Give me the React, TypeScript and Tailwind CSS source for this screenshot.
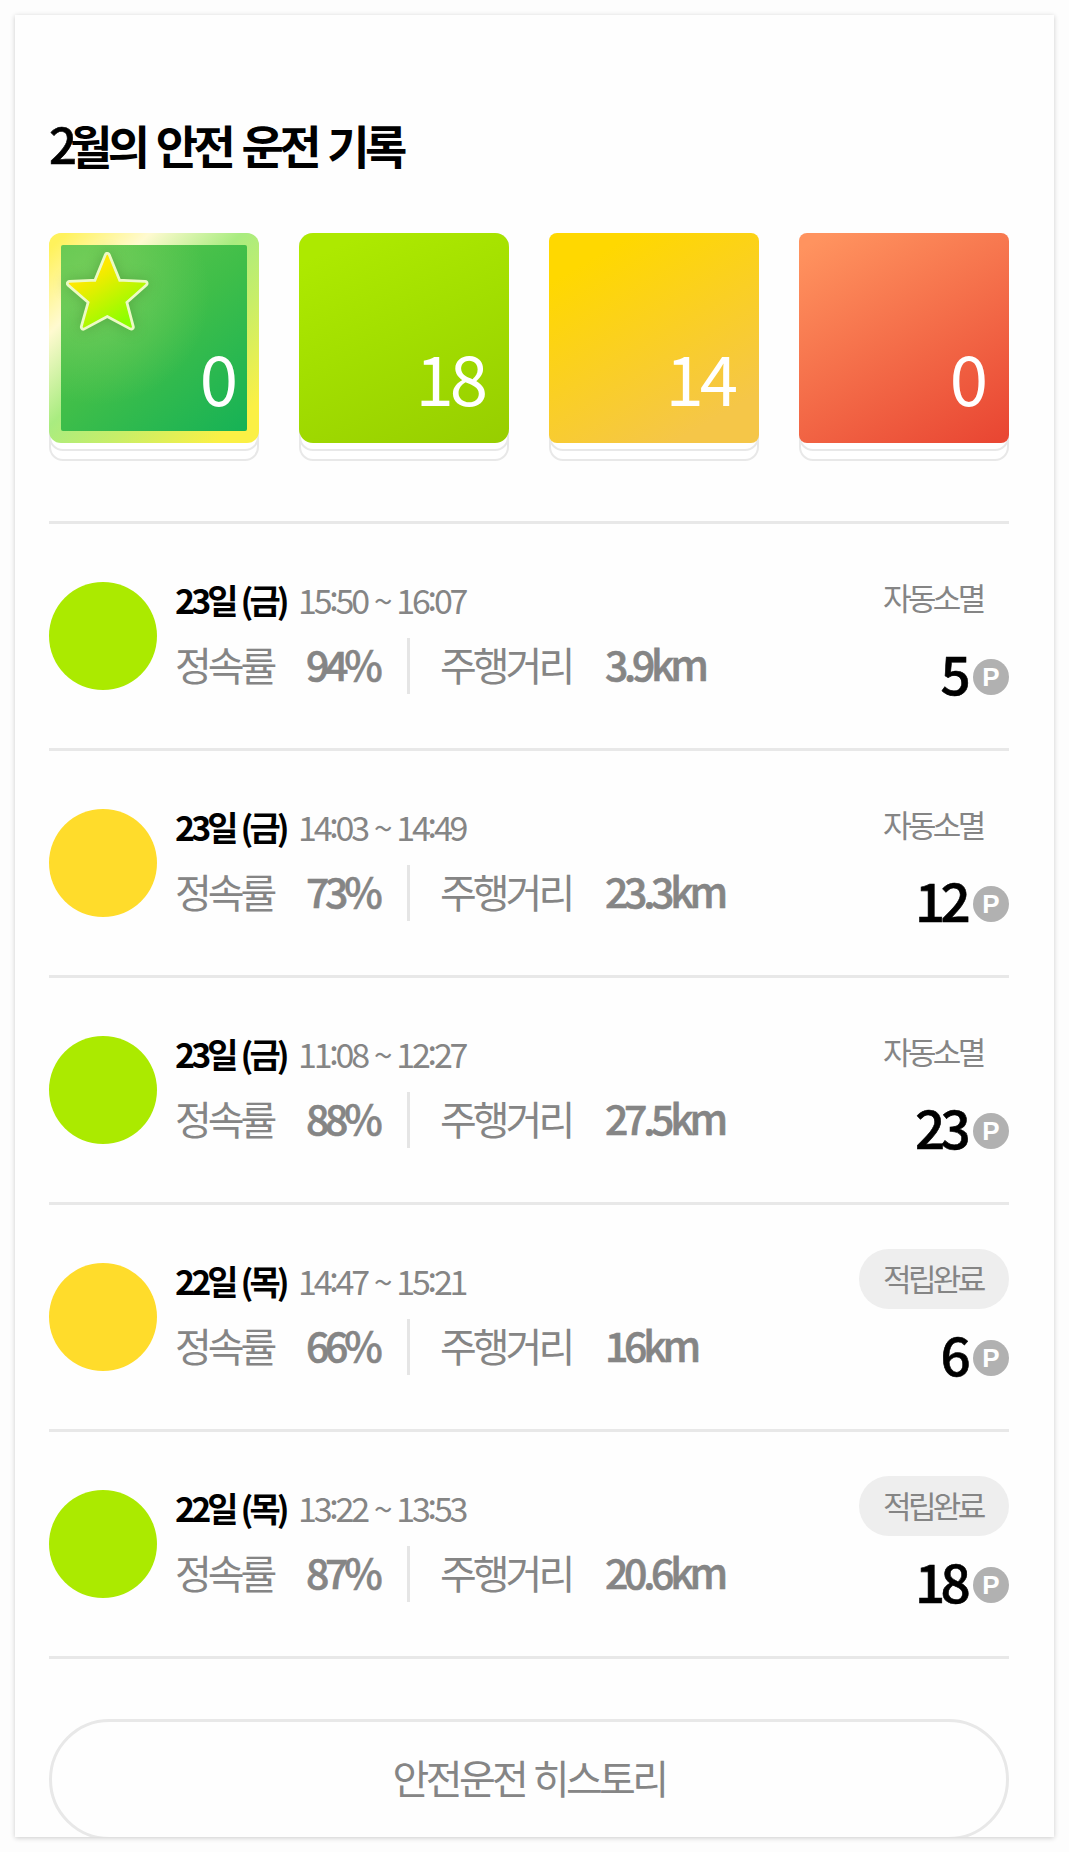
interface Trip {
  id: number;
  date: string;
  start: string;
  end: string;
  rate: number;
  distance: string;
  points: number;
  status: 'expired' | 'saved';
  grade: 'good' | 'normal';
}

const trips: Trip[] = [
  { id: 1, date: '23일 (금)', start: '15:50', end: '16:07', rate: 94, distance: '3.9km', points: 5, status: 'expired', grade: 'good' },
  { id: 2, date: '23일 (금)', start: '14:03', end: '14:49', rate: 73, distance: '23.3km', points: 12, status: 'expired', grade: 'normal' },
  { id: 3, date: '23일 (금)', start: '11:08', end: '12:27', rate: 88, distance: '27.5km', points: 23, status: 'expired', grade: 'good' },
  { id: 4, date: '22일 (목)', start: '14:47', end: '15:21', rate: 66, distance: '16km', points: 6, status: 'saved', grade: 'normal' },
  { id: 5, date: '22일 (목)', start: '13:22', end: '13:53', rate: 87, distance: '20.6km', points: 18, status: 'saved', grade: 'good' },
];

const summary = [
  { id: 'best', count: 0, className: 'rounded-[12px] bg-[linear-gradient(135deg,#fff25c_4%,#fffad0_24%,#a9ec80_46%,#c8ee68_65%,#fbf045_90%)]' },
  { id: 'good', count: 18, className: 'rounded-[14px] bg-[linear-gradient(155deg,#ade900_10%,#a2de00_50%,#97ce00_100%)]' },
  { id: 'normal', count: 14, className: 'rounded-[8px] bg-[linear-gradient(150deg,#ffd800_15%,#f5c648_85%)]' },
  { id: 'bad', count: 0, className: 'rounded-[8px] bg-[linear-gradient(150deg,#ff935f_5%,#e94733_97%)]' },
];

const starPath =
  'M50.3 14.5 L61.2 41.3 L88 42.5 L67.5 60.7 L74.2 86 L50.3 73.2 L26.4 86 L33.5 60.7 L12.5 42.5 L39.4 41.3 Z';

function Star() {
  return (
    <svg
      viewBox="0 0 100 100"
      className="absolute left-2 top-2 h-[100px] w-[100px] drop-shadow-[0_0_7px_rgba(60,130,40,0.45)]"
    >
      <defs>
        <linearGradient id="star-fill" x1="0.2" y1="0.1" x2="0.8" y2="1">
          <stop offset="0.15" stopColor="#ffe900" />
          <stop offset="0.9" stopColor="#8dff00" />
        </linearGradient>
      </defs>
      <path d={starPath} fill="#ecfac4" stroke="#ecfac4" strokeWidth="7" strokeLinejoin="round" />
      <path d={starPath} fill="url(#star-fill)" stroke="url(#star-fill)" strokeWidth="1.5" strokeLinejoin="round" />
    </svg>
  );
}

// Hours and minutes with the colon lifted to the middle of the digits
function Clock({ value }: { value: string }) {
  const [hour, minute] = value.split(':');
  return (
    <>
      {hour}
      <span className="align-[3px] leading-none">:</span>
      {minute}
    </>
  );
}

function PointIcon() {
  return (
    <span className="ml-[7px] mt-[18px] flex h-9 w-9 items-center justify-center rounded-full bg-[#b1b1b1] font-['Liberation_Sans',sans-serif] text-[26px] font-bold leading-9 tracking-normal text-white">
      P
    </span>
  );
}

function TripRow({ trip }: { trip: Trip }) {
  return (
    <li className="flex h-[227px] border-b-[3px] border-[#e8e8e8]">
      <div
        className={`mt-[58px] h-[108px] w-[108px] shrink-0 rounded-full ${
          trip.grade === 'good' ? 'bg-[#abea00]' : 'bg-[#ffdc2b]'
        }`}
      />

      <div className="ml-[18px] flex-1 pt-[53px]">
        <div className="flex h-11 items-start whitespace-pre text-[34px] leading-[46px]">
          <strong className="w-[123px] font-bold tracking-[-3.9px] text-black [word-spacing:2px]">{trip.date}</strong>
          <span className="tracking-[-3.2px] text-[#858585] [word-spacing:2.4px]">
            <Clock value={trip.start} /> ~ <Clock value={trip.end} />
          </span>
        </div>
        <div className="mt-[17px] flex h-14 items-start whitespace-nowrap text-[40px] leading-[52px] tracking-[-4px] text-[#858585]">
          <span className="w-[131px]">정속률</span>
          <span className="w-[101px] text-[41px] font-medium leading-[50px] tracking-[-4.3px] [-webkit-text-stroke:0.6px]">
            {trip.rate}%
          </span>
          <span className="h-14 w-[3px] bg-[#e5e5e5]" />
          <span className="ml-[30px] w-[165px]">주행거리</span>
          <span className="text-[41px] font-medium leading-[50px] tracking-[-4.3px] [-webkit-text-stroke:0.6px]">
            {trip.distance}
          </span>
        </div>
      </div>

      {/* Points */}
      <div className="flex flex-col items-end pt-11">
        <span
          className={`h-[60px] w-[150px] whitespace-nowrap rounded-full pl-6 text-[31px] leading-[58px] tracking-[-3.6px] text-[#858585] ${
            trip.status === 'saved' ? 'bg-[#eeeeee]' : ''
          }`}
        >
          {trip.status === 'saved' ? '적립완료' : '자동소멸'}
        </span>
        <div className="mt-[13px] flex h-[60px] items-start">
          <span className="text-[53px] font-medium leading-[63px] tracking-[-4.7px] text-black [-webkit-text-stroke:0.6px]">
            {trip.points}
          </span>
          <PointIcon />
        </div>
      </div>
    </li>
  );
}

export default function App() {
  return (
    <div className="h-[1852px] w-[1069px] bg-[#fdfdfd] p-[15px] font-['Noto_Sans_CJK_KR',sans-serif]">
      <main className="h-[1822px] w-[1039px] overflow-hidden bg-[#fefefe] pl-[34px] pr-[45px] pt-[97px] shadow-[0_1px_5px_rgba(0,0,0,0.2)]">
        <h1 className="h-[60px] whitespace-nowrap text-[46px] font-bold leading-[64px] tracking-[-4.5px] text-black [word-spacing:4.2px]">
          <span className="text-[49px] font-medium leading-none tracking-[-7px] [-webkit-text-stroke:0.6px]">2</span>월의 안전 운전 기록
        </h1>

        {/* Monthly summary */}
        <section className="mt-[61px] flex gap-10">
          {summary.map((item) => (
            <div key={item.id} className="relative h-[228px] w-[210px]">
              <div className="absolute inset-0 rounded-[14px] border-2 border-[#e8e8e8] bg-white" />
              <div className="absolute inset-x-0 top-0 h-[218px] rounded-[14px] border-2 border-[#e8e8e8] bg-white" />
              <div className={`relative h-[210px] p-3 ${item.className}`}>
                {item.id === 'best' && (
                  <div className="h-full rounded-[2px] bg-[radial-gradient(circle_at_20%_26%,rgba(150,215,110,0.5)_0%,rgba(150,215,110,0)_55%),linear-gradient(140deg,#5cc64c_10%,#3fbe49_50%,#16b256_100%)]" />
                )}
                {item.id === 'best' && <Star />}
                <span className="absolute bottom-[27px] right-[25px] text-[69px] font-normal leading-[80px] tracking-[-4px] text-white">
                  {item.count}
                </span>
              </div>
            </div>
          ))}
        </section>

        <ul className="mt-[60px] border-t-[3px] border-[#e8e8e8]">
          {trips.map((trip) => (
            <TripRow key={trip.id} trip={trip} />
          ))}
        </ul>

        <button className="mt-[60px] block h-[121px] w-full rounded-full border-[3px] border-[#e8e8e8] text-[40px] leading-[110px] tracking-[-3.6px] text-[#858585] [word-spacing:2px]">
          <span className="block h-[115px]">안전운전 히스토리</span>
        </button>
      </main>
    </div>
  );
}
